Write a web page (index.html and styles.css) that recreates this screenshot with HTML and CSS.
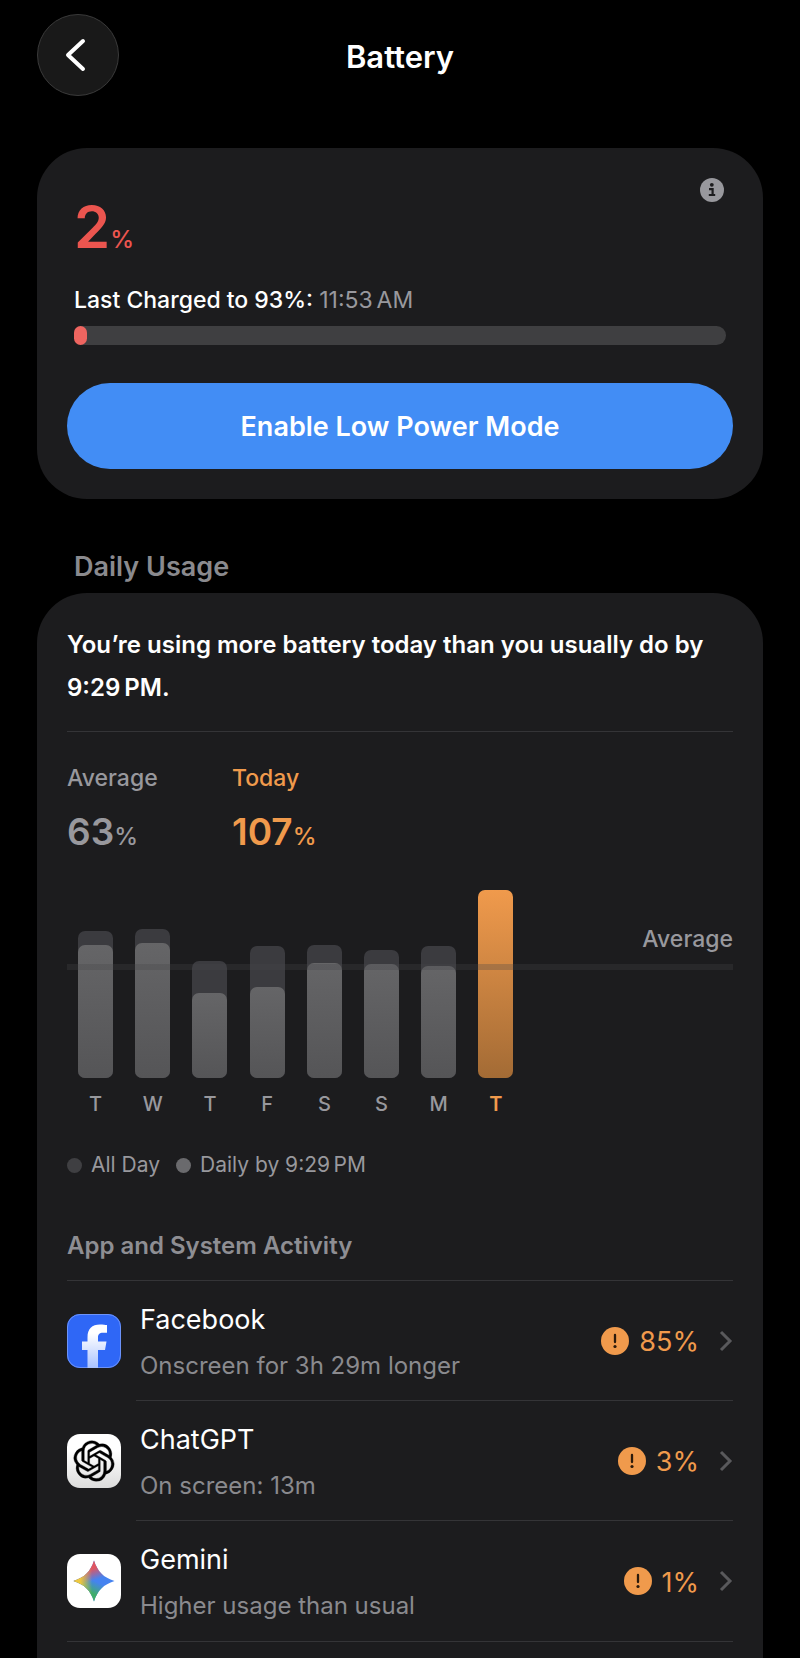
FILE: index.html
```html
<!DOCTYPE html>
<html lang="en">
<head>
    <meta charset="UTF-8">
    <meta name="viewport" content="width=device-width, initial-scale=1.0">
    <title>Battery</title>
    <link rel="stylesheet" href="styles.css">
</head>
<body>
    <header class="navbar">
        <button class="back" type="button" aria-label="Back">
            <svg width="24" height="36" viewBox="0 0 24 36" fill="none" stroke="#fff" stroke-width="4" stroke-linecap="round" stroke-linejoin="round"><path d="M19 4 4 18l15 14"/></svg>
        </button>
        <h1 class="title">Battery</h1>
    </header>

    <main>
        <section class="card level">
            <button class="info" type="button" aria-label="About battery level">
                <svg width="24" height="24" viewBox="0 0 24 24"><circle cx="12" cy="12" r="12" fill="#98989d"/><circle cx="11.8" cy="6.800" r="1.900" fill="#1c1c1e"/><path d="M9 11.200h3.600v5.500M8.800 17h6.400" fill="none" stroke="#1c1c1e" stroke-width="2.200"/></svg>
            </button>
            <div class="percent">2<span class="unit">%</span></div>
            <p class="charged">Last Charged to 93%: <span class="time">11:53&#8198;AM</span></p>
            <div class="meter"><div class="meter-fill" style="width: 2%"></div></div>
            <button class="low-power" type="button">Enable Low Power Mode</button>
        </section>

        <h2 class="section-title">Daily Usage</h2>

        <section class="card usage">
            <p class="summary">You’re using more battery today than you usually do by 9:29&#8198;PM.</p>

            <div class="stats">
                <div class="stat">
                    <div class="stat-label">Average</div>
                    <div class="stat-value">63<span class="unit">%</span></div>
                </div>
                <div class="stat today">
                    <div class="stat-label">Today</div>
                    <div class="stat-value">107<span class="unit">%</span></div>
                </div>
            </div>

            <div class="chart">
                <div class="bars">
                    <div class="bar" style="height: 78%"><div class="bar-part" style="height: 91%"></div></div>
                    <div class="bar" style="height: 79%"><div class="bar-part" style="height: 91%"></div></div>
                    <div class="bar" style="height: 62%"><div class="bar-part" style="height: 73%"></div></div>
                    <div class="bar" style="height: 70%"><div class="bar-part" style="height: 69%"></div></div>
                    <div class="bar" style="height: 71%"><div class="bar-part" style="height: 86%"></div></div>
                    <div class="bar" style="height: 68%"><div class="bar-part" style="height: 89%"></div></div>
                    <div class="bar" style="height: 70%"><div class="bar-part" style="height: 85%"></div></div>
                    <div class="bar today" style="height: 100%"></div>
                </div>
                <div class="average-line"><span class="average-label">Average</span></div>
            </div>
            <div class="days">
                <span>T</span><span>W</span><span>T</span><span>F</span><span>S</span><span>S</span><span>M</span><span class="today">T</span>
            </div>

            <div class="legend">
                <span class="key all-day">All Day</span>
                <span class="key daily">Daily by 9:29&#8198;PM</span>
            </div>

            <h3 class="activity-title">App and System Activity</h3>
            <ul class="apps">
                <li>
                    <a class="app" href="#facebook">
                        <svg class="app-icon" viewBox="0 0 54 54">
                            <defs>
                                <linearGradient id="fb" x1="0" y1="0" x2="0" y2="1">
                                    <stop offset="0.2" stop-color="#fff"/>
                                    <stop offset="1" stop-color="#a9c2ff"/>
                                </linearGradient>
                            </defs>
                            <rect width="54" height="54" rx="13" fill="#2f67f6"/>
                            <rect x="0.5" y="0.5" width="53" height="53" rx="12.5" fill="none" stroke="#6d93f8"/>
                            <path d="M20.5 54V36H15v-8.500h5.500v-4C20.500 14.500 25 10.500 33 10.500c3 0 5.500.3 7 .6v7.600h-4c-3.700 0-5 1.700-5 5v3.800h8.500L38 36h-7v18z" fill="url(#fb)"/>
                        </svg>
                        <span class="app-body">
                            <span class="app-text"><span class="app-name">Facebook</span><span class="app-note">Onscreen for 3h 29m longer</span></span>
                            <svg class="alert" viewBox="0 0 28 28"><circle cx="14" cy="14" r="14" fill="#f09a4c"/><path d="M14 8v7" stroke="#2b1a0c" stroke-width="2.300" stroke-linecap="round"/><circle cx="14" cy="19.500" r="1.600" fill="#2b1a0c"/></svg>
                            <span class="app-value">85%</span>
                            <svg class="chevron" viewBox="0 0 14 22"><path d="m2 2 9 9-9 9" fill="none" stroke="#59595c" stroke-width="3"/></svg>
                        </span>
                    </a>
                </li>
                <li>
                    <a class="app" href="#chatgpt">
                        <svg class="app-icon" viewBox="0 0 54 54">
                            <defs>
                                <linearGradient id="gpt" x1="0" y1="0" x2="0" y2="1">
                                    <stop offset="0.3" stop-color="#fff"/>
                                    <stop offset="1" stop-color="#dcdcdc"/>
                                </linearGradient>
                            </defs>
                            <rect width="54" height="54" rx="13" fill="url(#gpt)"/>
                            <path transform="translate(6.700 6.700) scale(1.690)" d="M22.2819 9.8211a5.9847 5.9847 0 0 0-.5157-4.9108 6.0462 6.0462 0 0 0-6.5098-2.9A6.0651 6.0651 0 0 0 4.9807 4.1818a5.9847 5.9847 0 0 0-3.9977 2.9 6.0462 6.0462 0 0 0 .7427 7.0966 5.98 5.98 0 0 0 .511 4.9107 6.051 6.051 0 0 0 6.5146 2.9001A5.9847 5.9847 0 0 0 13.2599 24a6.0557 6.0557 0 0 0 5.7718-4.2058 5.9894 5.9894 0 0 0 3.9977-2.9001 6.0557 6.0557 0 0 0-.7475-7.0729zm-9.022 12.6081a4.4755 4.4755 0 0 1-2.8764-1.0408l.1419-.0804 4.7783-2.7582a.7948.7948 0 0 0 .3927-.6813v-6.7369l2.02 1.1686a.071.071 0 0 1 .038.052v5.5826a4.504 4.504 0 0 1-4.4945 4.4944zm-9.6607-4.1254a4.4708 4.4708 0 0 1-.5346-3.0137l.142.0852 4.783 2.7582a.7712.7712 0 0 0 .7806 0l5.8428-3.3685v2.3324a.0804.0804 0 0 1-.0332.0615L9.74 19.9502a4.4992 4.4992 0 0 1-6.1408-1.6464zM2.3408 7.8956a4.485 4.485 0 0 1 2.3655-1.9728V11.6a.7664.7664 0 0 0 .3879.6765l5.8144 3.3543-2.0201 1.1685a.0757.0757 0 0 1-.071 0l-4.8303-2.7865A4.504 4.504 0 0 1 2.3408 7.872zm16.5963 3.8558L13.1038 8.364 15.1192 7.2a.0757.0757 0 0 1 .071 0l4.8303 2.7913a4.4944 4.4944 0 0 1-.6765 8.1042v-5.6772a.79.79 0 0 0-.407-.667zm2.0107-3.0231l-.142-.0852-4.7735-2.7818a.7759.7759 0 0 0-.7854 0L9.409 9.2297V6.8974a.0662.0662 0 0 1 .0284-.0615l4.8303-2.7866a4.4992 4.4992 0 0 1 6.6802 4.66zM8.3065 12.863l-2.02-1.1638a.0804.0804 0 0 1-.038-.0567V6.0742a4.4992 4.4992 0 0 1 7.3757-3.4537l-.142.0805L8.704 5.459a.7948.7948 0 0 0-.3927.6813zm1.0976-2.3654l2.602-1.4998 2.6069 1.4998v2.9994l-2.5974 1.4997-2.6067-1.4997Z" fill="#000" stroke="#000" stroke-width="0.200"/>
                        </svg>
                        <span class="app-body">
                            <span class="app-text"><span class="app-name">ChatGPT</span><span class="app-note">On screen: 13m</span></span>
                            <svg class="alert" viewBox="0 0 28 28"><circle cx="14" cy="14" r="14" fill="#f09a4c"/><path d="M14 8v7" stroke="#2b1a0c" stroke-width="2.300" stroke-linecap="round"/><circle cx="14" cy="19.500" r="1.600" fill="#2b1a0c"/></svg>
                            <span class="app-value">3%</span>
                            <svg class="chevron" viewBox="0 0 14 22"><path d="m2 2 9 9-9 9" fill="none" stroke="#59595c" stroke-width="3"/></svg>
                        </span>
                    </a>
                </li>
                <li>
                    <a class="app" href="#gemini">
                        <svg class="app-icon" viewBox="0 0 54 54">
                            <defs>
                                <linearGradient id="gem-red" gradientUnits="userSpaceOnUse" x1="25" y1="8" x2="31" y2="25">
                                    <stop offset="0.35" stop-color="#e05561"/>
                                    <stop offset="1" stop-color="#e05561" stop-opacity="0"/>
                                </linearGradient>
                                <linearGradient id="gem-green" gradientUnits="userSpaceOnUse" x1="23" y1="43" x2="30" y2="28">
                                    <stop offset="0.25" stop-color="#3fae6a"/>
                                    <stop offset="1" stop-color="#3fae6a" stop-opacity="0"/>
                                </linearGradient>
                                <linearGradient id="gem-yellow" gradientUnits="userSpaceOnUse" x1="8" y1="27" x2="25" y2="27">
                                    <stop offset="0.3" stop-color="#eec83e"/>
                                    <stop offset="1" stop-color="#eec83e" stop-opacity="0"/>
                                </linearGradient>
                                <clipPath id="gem-star">
                                    <path d="M27 6.500c3.500 11 9.500 17 20.500 20.500-11 3.500-17 9.500-20.500 20.500-3.500-11-9.500-17-20.500-20.500 11-3.500 17-9.500 20.500-20.500z"/>
                                </clipPath>
                            </defs>
                            <rect width="54" height="54" rx="13" fill="#fff"/>
                            <g clip-path="url(#gem-star)">
                                <rect width="54" height="54" fill="#4583f0"/>
                                <rect width="54" height="54" fill="url(#gem-green)"/>
                                <rect width="54" height="54" fill="url(#gem-red)"/>
                                <rect width="54" height="54" fill="url(#gem-yellow)"/>
                            </g>
                        </svg>
                        <span class="app-body">
                            <span class="app-text"><span class="app-name">Gemini</span><span class="app-note">Higher usage than usual</span></span>
                            <svg class="alert" viewBox="0 0 28 28"><circle cx="14" cy="14" r="14" fill="#f09a4c"/><path d="M14 8v7" stroke="#2b1a0c" stroke-width="2.300" stroke-linecap="round"/><circle cx="14" cy="19.500" r="1.600" fill="#2b1a0c"/></svg>
                            <span class="app-value">1%</span>
                            <svg class="chevron" viewBox="0 0 14 22"><path d="m2 2 9 9-9 9" fill="none" stroke="#59595c" stroke-width="3"/></svg>
                        </span>
                    </a>
                </li>
            </ul>
        </section>
    </main>
</body>
</html>
```
FILE: styles.css
```css
* {
    box-sizing: border-box;
}
body {
    margin: 0;
    padding: 0 37px;
    min-height: 100vh;
    display: flex;
    flex-direction: column;
    background: #000;
    color: #fff;
    font-family: Inter, "Liberation Sans", sans-serif;
    font-size: 24px;
}
h1, h2, h3, p, ul {
    margin: 0;
    padding: 0;
}
button {
    padding: 0;
    border: none;
    font-family: inherit;
    cursor: pointer;
}
svg {
    display: block;
}

/* Nav bar */
.navbar {
    display: grid;
    grid-template-columns: 82px 1fr 82px;
    align-items: center;
    padding: 14px 0 52px;
}
.back {
    display: flex;
    align-items: center;
    justify-content: center;
    width: 82px;
    height: 82px;
    padding-right: 4px;
    border: 1px solid #3a3a3a;
    border-radius: 50%;
    background: #191919;
}
.title {
    padding-top: 4px;
    font-size: 31px;
    line-height: 40px;
    font-weight: 600;
    text-align: center;
}

main {
    flex: 1;
    display: flex;
    flex-direction: column;
}
.card {
    padding: 30px;
    border-radius: 50px;
    background: #1c1c1e;
}

/* Battery level */
.level {
    display: flex;
    flex-direction: column;
}
.info {
    align-self: flex-end;
    margin-right: 9px;
    background: none;
}
.percent {
    padding: 0 7px;
    color: #eb554f;
    font-size: 58px;
    line-height: 50px;
    font-weight: 600;
}
.unit {
    font-size: 24px;
    line-height: 1;
    font-weight: 500;
}
.charged {
    margin-top: 32px;
    padding: 0 7px;
    font-size: 23px;
    line-height: 32px;
    font-weight: 500;
}
.time {
    color: #98989d;
    font-weight: 400;
}
.meter {
    height: 19px;
    margin: 10px 7px 38px;
    border-radius: 10px;
    background: #3f3f41;
}
.meter-fill {
    height: 100%;
    border-radius: 7px;
    background: #ee6560;
}
.low-power {
    height: 86px;
    border-radius: 43px;
    background: #428df5;
    color: #fff;
    font-size: 27px;
    font-weight: 600;
}

.section-title {
    padding: 50px 37px 8px;
    color: #8a8a8e;
    font-size: 27px;
    line-height: 36px;
    font-weight: 600;
}

/* Daily usage */
.usage {
    flex: 1;
    border-radius: 50px 50px 0 0;
}
.summary {
    padding-bottom: 22px;
    border-bottom: 1px solid #343437;
    font-size: 24px;
    line-height: 43px;
    font-weight: 600;
}
.stats {
    display: flex;
    padding-top: 28px;
}
.stat {
    width: 165px;
    color: #98989d;
    font-weight: 500;
}
.stat-label {
    font-size: 23px;
    line-height: 36px;
}
.stat-value {
    margin-top: 16px;
    font-size: 37px;
    line-height: 40px;
    font-weight: 600;
}
.stat.today {
    color: #f09a4c;
}

/* Bars are sized against the tallest day */
.chart {
    position: relative;
    height: 188px;
    margin-top: 38px;
}
.bars, .days {
    display: grid;
    grid-template-columns: repeat(8, 1fr);
    justify-items: center;
    width: 69%;
    padding-right: 2px;
}
.bars {
    height: 100%;
    align-items: end;
}
.bar {
    display: flex;
    align-items: flex-end;
    width: 35px;
    border-radius: 7px;
    background: #3b3b3f;
}
.bar-part {
    width: 100%;
    border-radius: 7px;
    background: linear-gradient(#656567, #555557);
}
.bar.today {
    background: linear-gradient(#f09a4c, #a36b35);
}
.average-line {
    position: absolute;
    left: 0;
    right: 0;
    bottom: 108px;
    height: 6px;
    background: rgba(70, 70, 74, 0.3);
}
.average-label {
    position: absolute;
    right: 0;
    bottom: 15px;
    color: #98989d;
    font-size: 23px;
    line-height: 32px;
    font-weight: 500;
}
.days {
    margin-top: 12px;
    color: #98989d;
    font-size: 20px;
    line-height: 28px;
    font-weight: 500;
}
.days .today {
    color: #f09a4c;
    font-weight: 600;
}
.legend {
    display: flex;
    gap: 16px;
    margin-top: 32px;
    color: #98989d;
    font-size: 21px;
    line-height: 30px;
}
.key {
    display: flex;
    align-items: center;
    gap: 9px;
}
.key::before {
    content: "";
    width: 15px;
    height: 15px;
    border-radius: 50%;
    background: #3f3f42;
}
.key.daily::before {
    background: #6a6a6d;
}

/* App list */
.activity-title {
    margin-top: 48px;
    padding-bottom: 16px;
    border-bottom: 1px solid #343437;
    color: #8e8e93;
    font-size: 24px;
    line-height: 36px;
    font-weight: 600;
}
.apps {
    list-style: none;
    border-bottom: 1px solid #343437;
}
.app {
    display: flex;
    align-items: center;
    gap: 15px;
    color: inherit;
    text-decoration: none;
}
.app-icon {
    width: 54px;
    height: 54px;
}
.app-body {
    flex: 1;
    display: flex;
    align-items: center;
    height: 120px;
    padding-left: 4px;
    border-bottom: 1px solid #343437;
}
.apps li:last-child .app-body {
    border-bottom: none;
}
.app-text {
    flex: 1;
    display: flex;
    flex-direction: column;
    gap: 10px;
    padding-top: 4px;
}
.app-name {
    font-size: 27px;
    line-height: 36px;
}
.app-note {
    color: #8a8a8e;
    font-size: 24px;
    line-height: 36px;
}
.alert {
    width: 28px;
    height: 28px;
}
.app-value {
    margin: 0 20px 0 10px;
    padding-top: 3px;
    color: #f09a4c;
    font-size: 27px;
    line-height: 36px;
}
.chevron {
    width: 14px;
    height: 22px;
}
```
